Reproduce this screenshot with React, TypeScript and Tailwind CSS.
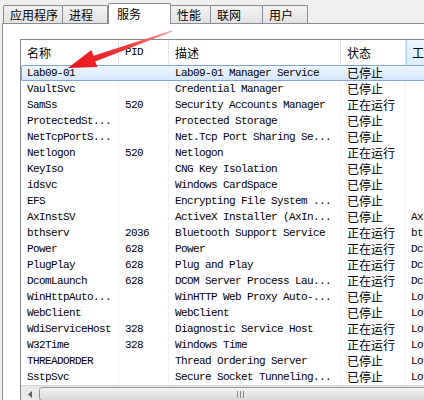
import React from "react";

const rows: [string, string, string, string, string][] = [
  ["Lab09-01", "", "Lab09-01 Manager Service", "已停止", ""],
  ["VaultSvc", "", "Credential Manager", "已停止", ""],
  ["SamSs", "520", "Security Accounts Manager", "正在运行", ""],
  ["ProtectedSt...", "", "Protected Storage", "已停止", ""],
  ["NetTcpPortS...", "", "Net.Tcp Port Sharing Se...", "已停止", ""],
  ["Netlogon", "520", "Netlogon", "正在运行", ""],
  ["KeyIso", "", "CNG Key Isolation", "已停止", ""],
  ["idsvc", "", "Windows CardSpace", "已停止", ""],
  ["EFS", "", "Encrypting File System ...", "已停止", ""],
  ["AxInstSV", "", "ActiveX Installer (AxIn...", "已停止", "Ax"],
  ["bthserv", "2036", "Bluetooth Support Service", "正在运行", "bt"],
  ["Power", "628", "Power", "正在运行", "Dc"],
  ["PlugPlay", "628", "Plug and Play", "正在运行", "Dc"],
  ["DcomLaunch", "628", "DCOM Server Process Lau...", "正在运行", "Dc"],
  ["WinHttpAuto...", "", "WinHTTP Web Proxy Auto-...", "已停止", "Lo"],
  ["WebClient", "", "WebClient", "已停止", "Lo"],
  ["WdiServiceHost", "328", "Diagnostic Service Host", "正在运行", "Lo"],
  ["W32Time", "328", "Windows Time", "正在运行", "Lo"],
  ["THREADORDER", "", "Thread Ordering Server", "已停止", "Lo"],
  ["SstpSvc", "", "Secure Socket Tunneling...", "已停止", "Lo"],
];

const tabs: { label: string; w: string; sel?: boolean }[] = [
  { label: "应用程序", w: "w-[60px]" },
  { label: "进程", w: "w-[46px]" },
  { label: "服务", w: "w-[63px]", sel: true },
  { label: "性能", w: "w-[41px]" },
  { label: "联网", w: "w-[53px]" },
  { label: "用户", w: "w-[46px]" },
];

const mono = "font-['Liberation_Mono','Noto_Sans_CJK_SC',monospace] text-[11px] tracking-[-0.6px]";
const cjk = "font-['Noto_Sans_CJK_SC',sans-serif] text-[12px]";

export default function App() {
  return (
    <div className="relative w-[424px] h-[400px] overflow-hidden bg-[#f0f0f0] text-black">
      {/* tab strip */}
      <div className="flex items-end h-[23px] pl-[3px]">
        {tabs.map((t) =>
          t.sel ? (
            <div
              key={t.label}
              className={`${t.w} h-[21px] bg-white border border-b-0 border-[#898c95] rounded-t-[2px] flex items-center pl-[8px] relative z-10 -mb-px ${cjk}`}
            >
              {t.label}
            </div>
          ) : (
            <div
              key={t.label}
              className={`${t.w} h-[18px] -ml-px first:ml-0 bg-gradient-to-b from-[#f3f3f3] to-[#e2e2e2] border border-b-0 border-[#898c95] rounded-t-[2px] flex items-center pl-[6px] leading-none ${cjk}`}
            >
              {t.label}
            </div>
          )
        )}
      </div>
      {/* panel */}
      <div className="ml-[2px] h-[377px] bg-white border-l border-t border-[#898c95] pl-[17px] pt-[15px]">
        <div className="h-[400px] w-[500px] border-l border-t border-[#828790] flex flex-col">
          {/* header */}
          <div className={`grid grid-cols-[98px_50px_172px_65px_110px] h-[25px] items-stretch ${cjk}`}>
            <div className="flex items-center pl-[6px] border-r border-[#e5e5e5]">名称</div>
            <div className={`flex items-center pl-[6px] border-r border-[#e5e5e5] ${mono}`}>PID</div>
            <div className="flex items-center pl-[6px] border-r border-[#e5e5e5]">描述</div>
            <div className="flex items-center pl-[6px] border-r border-[#e5e5e5]">状态</div>
            <div className="flex items-center pl-[5px] bg-gradient-to-b from-[#eaf6fd] to-[#d9eefb] border-l border-[#a8d4f0]">工作组</div>
          </div>
          {/* rows */}
          <div className="flex flex-col">
            {rows.map((r, i) => (
              <div
                key={r[0]}
                className={`grid grid-cols-[98px_50px_172px_65px_110px] h-[16px] items-center ${
                  i === 0
                    ? "bg-gradient-to-b from-[#f0f7fe] to-[#d3e6fc] outline outline-1 -outline-offset-1 outline-[#7fa6d6] rounded-[2px]"
                    : ""
                }`}
              >
                <div className={`pl-[6px] h-full flex items-center border-r ${i === 0 ? "border-transparent" : "border-[#f2f2f2]"} whitespace-nowrap ${mono}`}>{r[0]}</div>
                <div className={`pl-[6px] h-full flex items-center border-r ${i === 0 ? "border-transparent" : "border-[#f2f2f2]"} ${mono}`}>{r[1]}</div>
                <div className={`pl-[6px] h-full flex items-center border-r ${i === 0 ? "border-transparent" : "border-[#f2f2f2]"} whitespace-nowrap ${mono}`}>{r[2]}</div>
                <div className={`pl-[6px] h-full flex items-center border-r ${i === 0 ? "border-transparent" : "border-[#f2f2f2]"} leading-none ${cjk}`}>{r[3]}</div>
                <div className={`pl-[5px] h-full flex items-center whitespace-nowrap ${mono}`}>{r[4]}</div>
              </div>
            ))}
          </div>
          {/* horizontal scrollbar */}
          <div className="flex h-[17px] bg-[#e9e9e9] border-t border-[#d6d6d6] items-stretch">
            <div className="w-[17px] flex items-center justify-center">
              <svg width="4" height="7" viewBox="0 0 4 7">
                <path d="M4 0 L0 3.5 L4 7 Z" fill="#606060" />
              </svg>
            </div>
            <div className="flex-1 my-[1px] ml-[1px] rounded-[3px] border border-[#979797] bg-gradient-to-b from-[#f4f4f4] to-[#d9d9d9] flex items-center pl-[197px]">
              <svg width="7" height="7" viewBox="0 0 7 7">
                <path d="M0.5 0 V7 M3.5 0 V7 M6.5 0 V7" stroke="#8a8a8a" strokeWidth="1" />
              </svg>
            </div>
          </div>
        </div>
      </div>
      {/* red arrow annotation */}
      <svg className="absolute left-0 top-0 pointer-events-none" width="424" height="400" viewBox="0 0 424 400">
        <defs>
          <linearGradient id="ag" x1="172" y1="31" x2="68" y2="68" gradientUnits="userSpaceOnUse">
            <stop offset="0" stopColor="#ff9a9a" />
            <stop offset="0.4" stopColor="#f23a3a" />
            <stop offset="1" stopColor="#e8141c" />
          </linearGradient>
        </defs>
        <polygon
          points="172.3,31.6 171.7,30.4 93.6,55.8 91.4,50.1 68,68 97.4,67.1 95.2,61.6"
          fill="url(#ag)"
        />
      </svg>
    </div>
  );
}
